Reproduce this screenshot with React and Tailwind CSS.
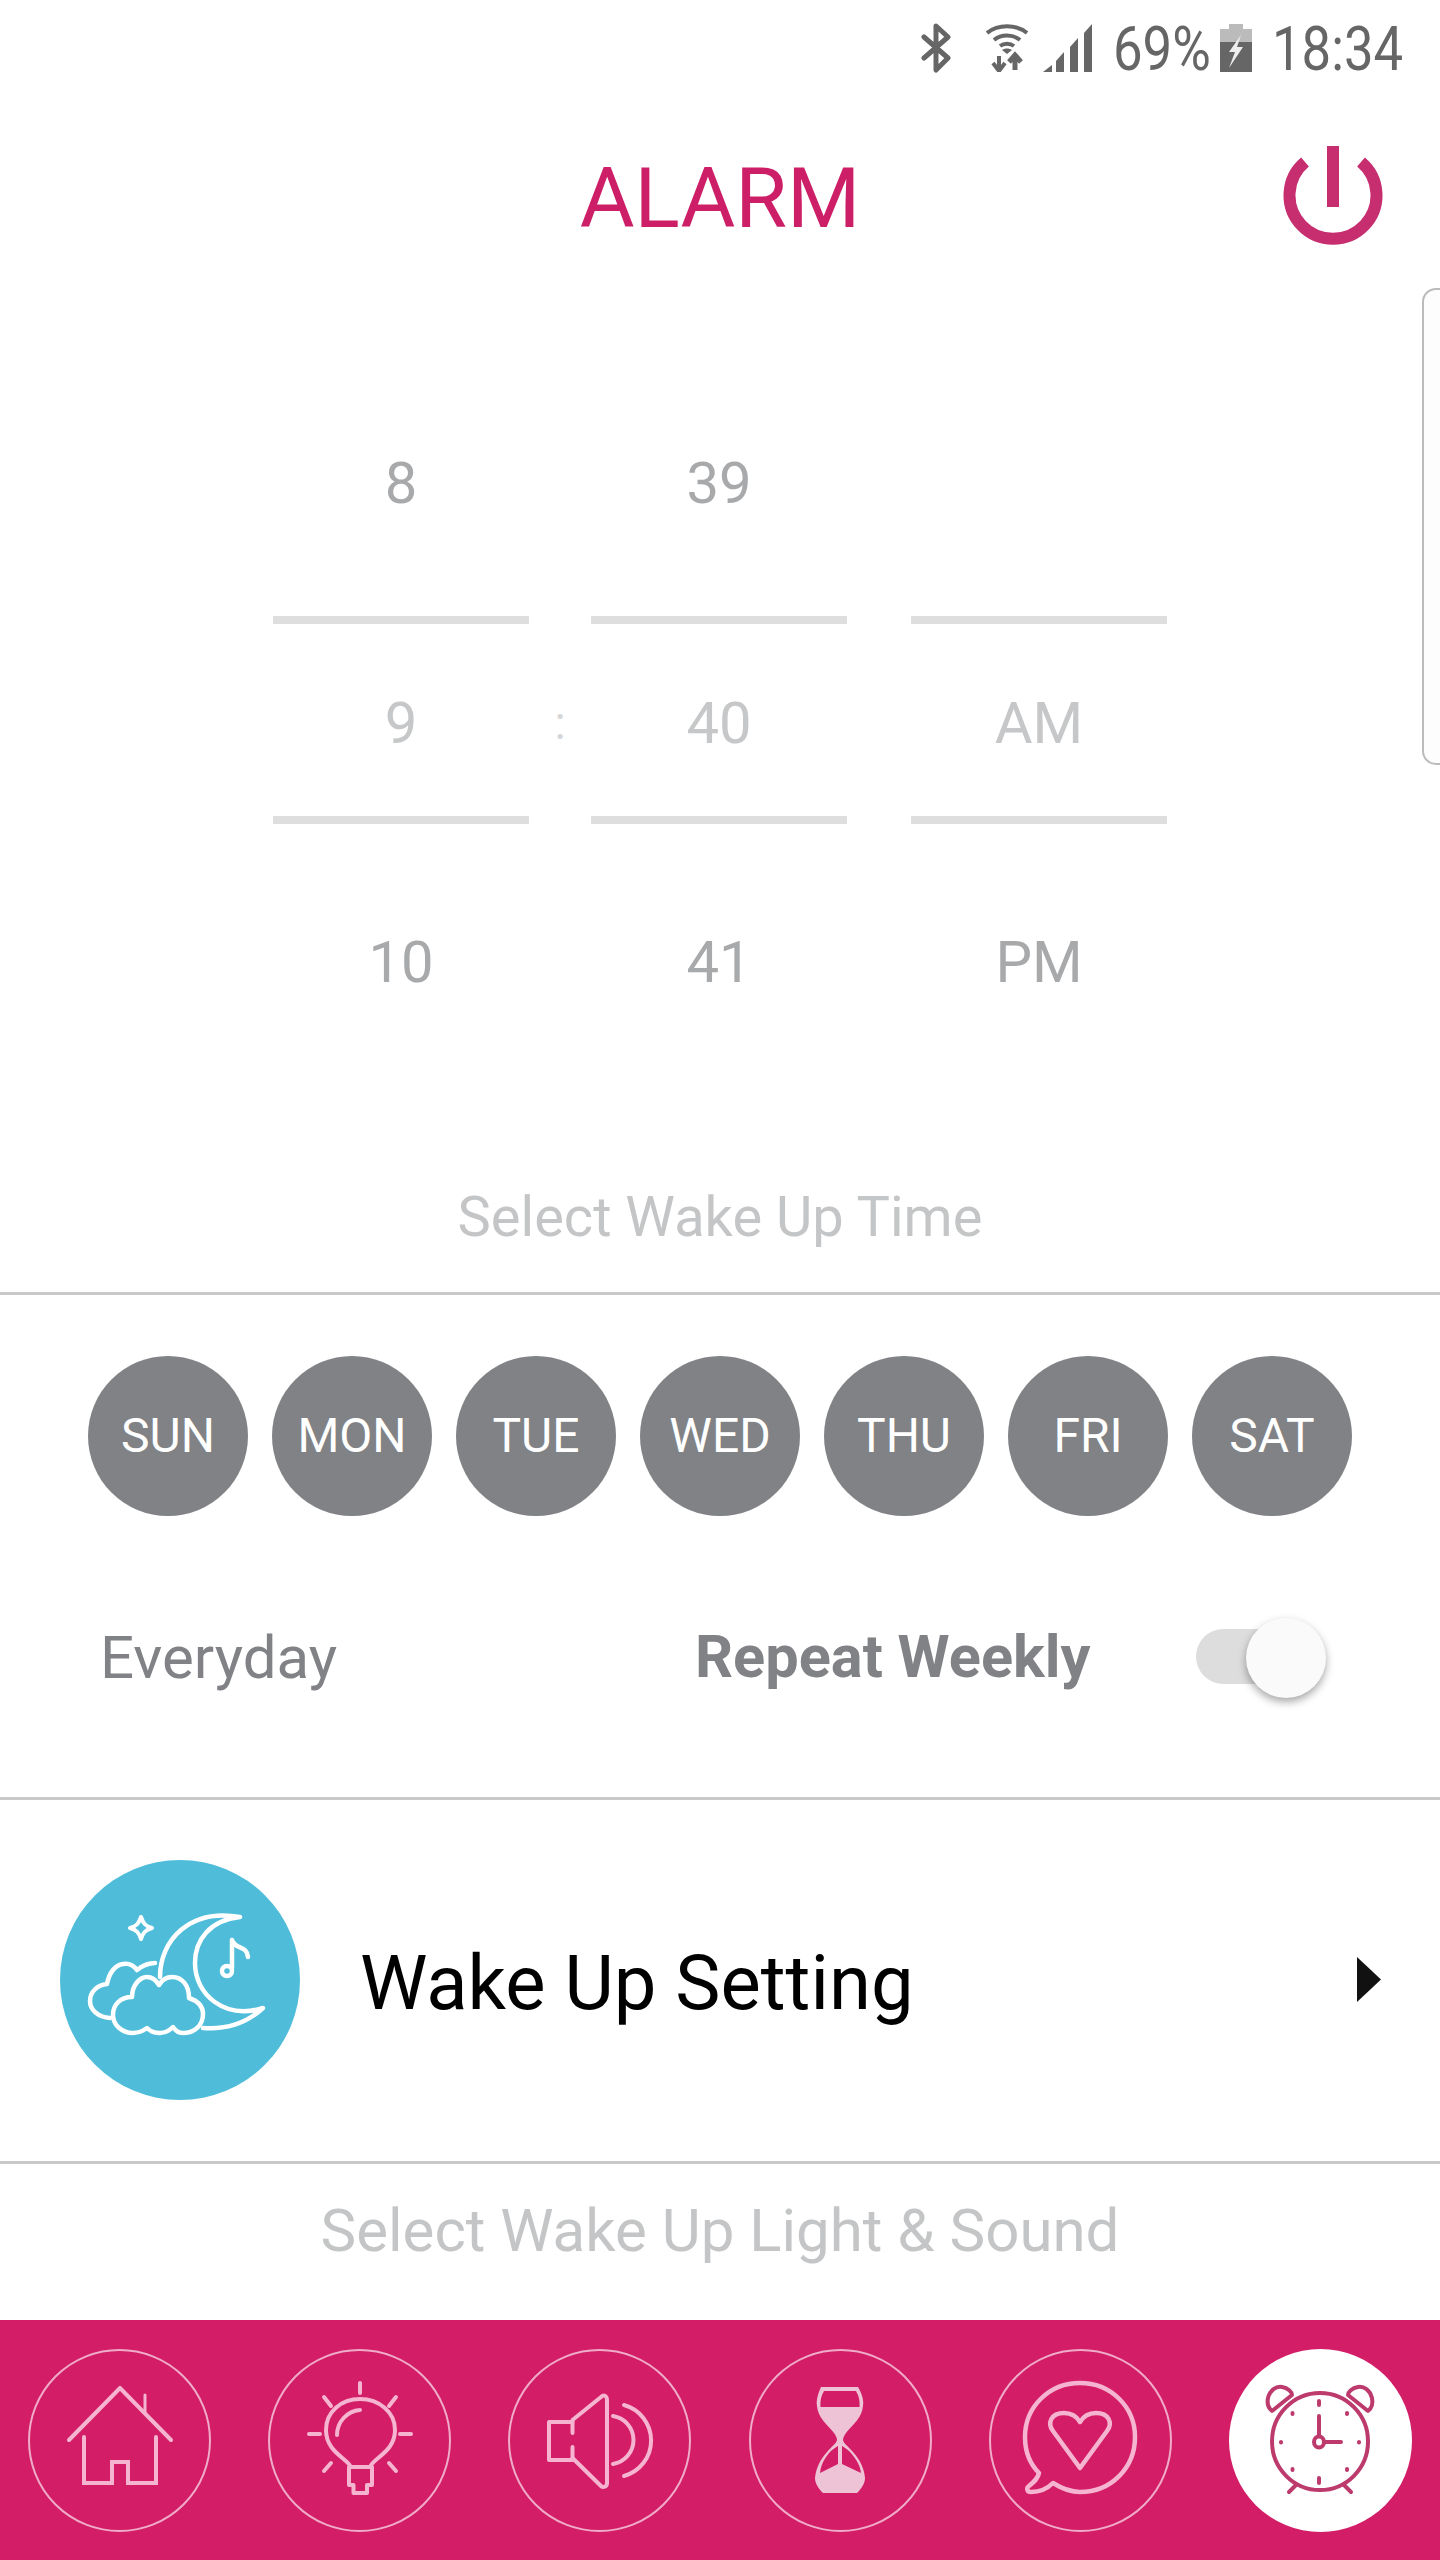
const F = { fontFamily: "Roboto, sans-serif" };

function Bluetooth() {
  return (
    <svg width="30" height="50" viewBox="0 0 30 50" fill="none" stroke="#666" strokeWidth="5" strokeLinejoin="round" strokeLinecap="round">
      <path d="M3 14 L27 35 L15 47 V3 L27 14 L3 35" />
    </svg>
  );
}
function Wifi() {
  return (
    <svg width="42" height="48" viewBox="0 0 42 48" fill="none" stroke="#666" strokeWidth="4">
      <path d="M1 9 C12 0 30 0 41 9" />
      <path d="M8 16 C15 10 27 10 34 16" />
      <path d="M14 22 C18 19 24 19 28 22" />
      <path d="M21 30 L16 26 C19 24 23 24 26 26 Z" fill="#666" stroke="none" />
      <path d="M13 32 V46 M7 39 L13 47 L19 39" strokeWidth="4" />
      <path d="M29 46 V31 M23 38 L29 31 L35 38" strokeWidth="5" />
    </svg>
  );
}
function Signal() {
  return (
    <svg width="49" height="48" viewBox="0 0 49 48" fill="#666">
      <path d="M0 48 L9 41 V48 Z" />
      <path d="M13 48 V37 L21 28 V48 Z" />
      <path d="M27 48 V23 L35 14 V48 Z" />
      <path d="M41 48 V9 L49 0 V48 Z" />
    </svg>
  );
}
function Battery() {
  return (
    <svg width="32" height="48" viewBox="0 0 32 48">
      <path d="M9 0 H23 V5 H32 V19 H0 V5 H9 Z" fill="#bbb" />
      <path d="M0 18 H32 V48 H0 Z" fill="#666" />
      <path d="M21 11 L9 28 H15 L9 44 L23 23 H17 Z" fill="#eee" />
    </svg>
  );
}
function Power() {
  return (
    <svg width="100" height="106" viewBox="0 0 100 106" fill="none" stroke="#c62e70" strokeWidth="12">
      <path d="M22 16 A43.5 43.5 0 1 0 78 16" />
      <path d="M50 0 V61" />
    </svg>
  );
}
function WakeIcon() {
  return (
    <svg width="240" height="240" viewBox="0 0 240 240" fill="none" stroke="#fff" strokeWidth="4.5" strokeLinejoin="round" strokeLinecap="round">
      <path d="M100 117 C100 80 130 48 180 57 C150 60 135 80 135 103 C135 135 165 160 203 148 C190 160 170 170 143 168" />
      <path d="M172 80 V108 M172 80 C175 90 187 85 188 97" />
      <circle cx="167" cy="111" r="5" strokeWidth="4.5" />
      <path d="M81 57 C83 63 85 66 92 68 C85 70 83 73 81 79 C79 73 77 70 70 68 C77 66 79 63 81 57 Z" strokeWidth="4" />
      <path d="M95 103 C88 103 82 106 77 110 C74 106 69 103 63 104 C55 105 49 113 47 124 C37 125 30 132 30 141 C30 150 38 157 50 158" />
      <path d="M53 155 C53 145 60 137 72 137 C72 125 80 117 87 117 C92 117 96 120 99 125 C102 120 106 117 112 117 C122 117 129 125 129 138 C138 141 143 147 143 154 C143 165 135 173 123 173 C119 173 115 170 113 167 C109 171 105 173 100 173 C95 173 90 171 87 168 C83 171 78 173 73 173 C62 173 53 165 53 155 Z" />
    </svg>
  );
}

const nav = "flex h-[183px] w-[183px] items-center justify-center rounded-full border-2 border-[#f0abc8]";

function Home() {
  return (
    <svg className="mb-[8px]" width="106" height="100" viewBox="0 0 106 100" fill="none" stroke="#f5b5d0" strokeWidth="4" strokeLinecap="round" strokeLinejoin="miter">
      <path d="M2 54 L53 2 L104 54" />
      <path d="M78 26 V9" strokeWidth="3" />
      <path d="M17 51 V97 H45 V76 H61 V97 H89 V51" />
    </svg>
  );
}
function Bulb() {
  return (
    <svg className="mb-[4px]" width="110" height="116" viewBox="0 0 110 116" fill="none" stroke="#f5b5d0" strokeWidth="4" strokeLinecap="round" strokeLinejoin="round">
      <path d="M55 3 V13 M4 54 H15 M95 54 H106 M19 17 L26 26 M91 17 L84 26 M19 91 L26 83 M91 91 L84 83" />
      <path d="M46 87 C42 78 21 72 21 50 C21 32 36 19 55 19 C74 19 90 32 90 50 C90 72 68 78 65 87 Z" />
      <path d="M32 55 C32 42 42 31 55 30" />
      <path d="M44 87 V105 H48.5 V113 H62 V105 H67 V87" />
    </svg>
  );
}
function Speaker() {
  return (
    <svg className="mt-[2px]" width="110" height="98" viewBox="0 0 110 98" fill="none" stroke="#f5b5d0" strokeWidth="4" strokeLinecap="round" strokeLinejoin="round">
      <path d="M27.5 30 H4 V68 H27.5" />
      <path d="M27.5 28 L56 5 C59 2 62 4 62 8 V91 C62 95 58 96 56 94 L27.5 66" />
      <path d="M27.5 30 V41 M27.5 55 V68" />
      <path d="M68 24 A24.3 24.3 0 0 1 68 72" />
      <path d="M79 13 A36.8 36.8 0 0 1 79 84" />
    </svg>
  );
}
function Hourglass() {
  return (
    <svg width="50" height="108" viewBox="0 0 50 108" fill="#edc3d5">
      <path d="M6 1 H43 C47 8 49 14 48 20 C47 32 38 38 31 47 C29 50 28 52 28 54 C29 58 33 60 38 66 C45 74 49 82 50 92 C50 97 47 102 42 107 H8 C3 102 0 97 0 92 C1 82 5 74 12 66 C17 60 21 58 22 54 C22 52 21 50 19 47 C12 38 3 32 2 20 C1 14 3 8 6 1 Z" />
      <path d="M9 5 H41 C44 10 45 15 44.5 21 H5.5 C5 15 6 10 9 5 Z" fill="#d31d67" />
      <path d="M23 60 V78 L5 87 C6 78 10 72 14 67 C18 63 21 61 23 60 Z" fill="#d31d67" />
      <path d="M27 60 V78 L46 87 C45 78 40 72 36 67 C32 63 29 61 27 60 Z" fill="#d31d67" />
    </svg>
  );
}
function Chat() {
  return (
    <svg className="mb-[4px]" width="116" height="116" viewBox="0 0 116 116" fill="none" stroke="#f5b5d0" strokeWidth="4.5" strokeLinejoin="round" strokeLinecap="round">
      <path d="M17 93 C7 83 3 71 3 57 C3 27 27 3 58 3 C89 3 113 27 113 57 C113 88 89 112 58 112 C48 112 39 108 31 103 C25 109 17 112 9 112 C5 112 4 108 7 106 C13 101 16 98 17 93 Z" />
      <path d="M58 88 L31 51 C25 43 29 33 42 33 C50 33 55 37 58 42 C61 37 66 33 74 33 C87 33 91 43 85 51 Z" />
    </svg>
  );
}
function Clock() {
  return (
    <svg width="112" height="112" viewBox="0 0 112 112" fill="none" stroke="#bd3a6c" strokeWidth="4" strokeLinecap="round" strokeLinejoin="round">
      <ellipse cx="56" cy="57.5" rx="48" ry="48.5" />
      <path d="M4 14 C6 6 12 2 18 3 C24 4 28 8 28 11 L8 27 C4 24 3 19 4 14 Z" />
      <path d="M108 14 C106 6 100 2 94 3 C88 4 84 8 84 11 L104 27 C108 24 109 19 108 14 Z" />
      <path d="M32 101 L25 108 M80 101 L87 108" />
      <ellipse cx="55" cy="58" rx="5" ry="5.5" />
      <path d="M55 32 V52 M61 58 H77" />
      <path d="M55 17 V21 M55 94 V99 M17 58 V58.5 M95 58 V58.5 M28.5 29 V30 M83 29 V30 M28.5 85 V86 M83 85 V86" />
    </svg>
  );
}

function WheelCol({ items }) {
  return (
    <div className="flex w-[256px] flex-col items-center">
      <div className="flex h-[204px] items-center justify-center pb-[62px] text-[58px] text-[#a8a9ab]">{items[0]}</div>
      <div className="h-[8px] w-full bg-[#dedede]" />
      <div className="flex h-[192px] items-center justify-center pt-[6px] text-[58px] text-[#c6c7c8]">{items[1]}</div>
      <div className="h-[8px] w-full bg-[#dedede]" />
      <div className="flex h-[276px] w-full items-center justify-center text-[58px] text-[#a8a9ab]">{items[2]}</div>
    </div>
  );
}

const days = ["SUN", "MON", "TUE", "WED", "THU", "FRI", "SAT"];

export default function App() {
  return (
    <div className="relative flex h-[2560px] w-[1440px] flex-col overflow-hidden bg-white" style={F}>
      {/* status bar */}
      <div className="flex h-[96px] items-center justify-end pr-[40px]">
        <div className="mr-[35px]"><Bluetooth /></div>
        <div className="mr-[15px]"><Wifi /></div>
        <div className="mr-[21px]"><Signal /></div>
        <div className="mr-[11px] w-[96px] origin-left scale-x-[0.85] whitespace-nowrap pt-[2px] text-[62px] leading-none text-[#666]">69%</div>
        <div className="mr-[20px]"><Battery /></div>
        <div className="w-[128px] origin-left scale-x-[0.85] whitespace-nowrap pt-[2px] text-[62px] leading-none text-[#666]">18:34</div>
      </div>

      {/* title */}
      <div className="relative mt-[53px] flex h-[100px] items-center justify-center">
        <div className="text-[84px] leading-none text-[#cd1f67]">ALARM</div>
        <div className="absolute right-[57px] top-[-3px]"><Power /></div>
      </div>

      {/* picker */}
      <div className="mt-[163px] flex justify-center">
        <div className="flex">
          <WheelCol items={["8", "9", "10"]} />
          <div className="flex w-[62px] flex-col items-center"><div className="mt-[212px] flex h-[192px] items-center pt-[6px] text-[46px] text-[#d5d6d7]">:</div></div>
          <WheelCol items={["39", "40", "41"]} />
          <div className="w-[64px]" />
          <WheelCol items={["", "AM", "PM"]} />
        </div>
      </div>

      <div className="mt-[89px] text-center text-[56px] leading-none text-[#c4c5c6]">Select Wake Up Time</div>

      <div className="mt-[47px] h-[3px] bg-[#c9c9c9]" />

      {/* days */}
      <div className="mt-[61px] flex justify-center gap-[24px]">
        {days.map((d) => (
          <div key={d} className="flex h-[160px] w-[160px] items-center justify-center rounded-full bg-[#808285] text-[48px] text-white">{d}</div>
        ))}
      </div>

      {/* repeat */}
      <div className="relative mt-[100px] flex h-[84px] items-center pl-[100px]">
        <div className="w-[237px] whitespace-nowrap text-[60px] leading-none text-[#808285]">Everyday</div>
        <div className="ml-[358px] whitespace-nowrap text-[59.5px] font-bold leading-none text-[#808285]">Repeat Weekly</div>
        <div className="absolute left-[1196px] top-[13px] h-[55px] w-[104px] rounded-full bg-[#dddddd]" />
        <div className="absolute left-[1246px] top-[2px] h-[80px] w-[80px] rounded-full bg-[#fafafa] shadow-[0_4px_8px_rgba(0,0,0,0.35)]" />
      </div>

      <div className="mt-[97px] h-[3px] bg-[#c9c9c9]" />

      {/* wake up setting */}
      <div className="relative mt-[60px] flex h-[240px] items-center pl-[60px]">
        <div className="h-[240px] w-[240px] rounded-full bg-[#4fbcd9]"><WakeIcon /></div>
        <div className="ml-[60px] pt-[5px] text-[76px] leading-none text-black">Wake Up Setting</div>
        <svg className="absolute left-[1357px] top-[97px]" width="24" height="45" viewBox="0 0 24 45"><path d="M0 0 L24 22.5 L0 45 Z" fill="#111" /></svg>
      </div>

      <div className="mt-[61px] h-[3px] bg-[#c9c9c9]" />

      <div className="mt-[37px] text-center text-[60px] leading-none text-[#c4c5c6]">Select Wake Up Light &amp; Sound</div>

      {/* nav */}
      <div className="absolute bottom-0 left-0 right-0 flex h-[240px] items-center justify-between bg-[#d31d67] px-[28px]">
        <div className={nav}><Home /></div>
        <div className={nav}><Bulb /></div>
        <div className={nav}><Speaker /></div>
        <div className={nav}><Hourglass /></div>
        <div className={nav}><Chat /></div>
        <div className="flex h-[183px] w-[183px] items-center justify-center rounded-full bg-white"><Clock /></div>
      </div>

      {/* edge handle */}
      <div className="absolute right-[-8px] top-[288px] h-[477px] w-[26px] rounded-l-[14px] border-2 border-[#bbbbbb] bg-[#fdfdfd]" />
    </div>
  );
}
